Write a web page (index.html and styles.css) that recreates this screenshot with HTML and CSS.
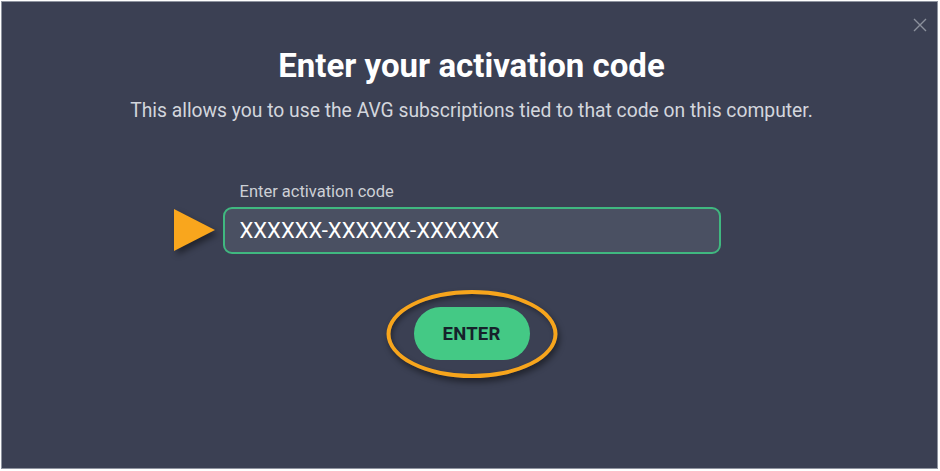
FILE: index.html
```html
<!DOCTYPE html>
<html lang="en">
<head>
<meta charset="utf-8">
<title>Enter your activation code</title>
<link rel="stylesheet" href="styles.css">
</head>
<body>
<div class="frame">
  <button class="close" aria-label="Close">
    <svg width="14" height="14" viewBox="0 0 14 14"><path d="M1 1L13 13M13 1L1 13" stroke="#8b909c" stroke-width="1.4" fill="none"/></svg>
  </button>
  <div class="content">
    <h1 class="title">Enter your activation code</h1>
    <p class="subtitle">This allows you to use the AVG subscriptions tied to that code on this computer.</p>
    <div class="field">
      <label class="label" for="code">Enter activation code</label>
      <div class="input-wrap">
        <span class="pointer" aria-hidden="true"></span>
        <input id="code" class="input" type="text" value="XXXXXX-XXXXXX-XXXXXX">
      </div>
    </div>
    <div class="action">
      <span class="ring" aria-hidden="true"></span>
      <button class="enter">ENTER</button>
    </div>
  </div>
</div>
</body>
</html>
```

FILE: styles.css
```css
* { box-sizing: border-box; }
html, body { margin: 0; padding: 0; }
body {
  background: #ffffff;
  width: 940px;
  height: 471px;
  padding: 1px 0 0 1px;
  font-family: Roboto, "Liberation Sans", sans-serif;
}
.frame {
  position: relative;
  width: 937px;
  height: 468px;
  background: #3b4053;
  border: 1px solid #8f94a0;
}
.close {
  position: absolute;
  top: 16px;
  right: 10px;
  width: 14px;
  height: 14px;
  padding: 0;
  border: 0;
  background: none;
  display: flex;
}
.content {
  display: flex;
  flex-direction: column;
  align-items: center;
  padding: 45px 0 0 4px;
}
.title {
  margin: 0;
  font-size: 33px;
  line-height: 38px;
  font-weight: 700;
  color: #ffffff;
}
.subtitle {
  margin: 14px 0 0;
  font-size: 19.3px;
  line-height: 24px;
  color: #d3d6dd;
}
.field {
  margin-top: 60px;
  display: flex;
  flex-direction: column;
  width: 498px;
}
.label {
  padding-left: 17px;
  font-size: 16.5px;
  line-height: 18px;
  color: #cdd0d6;
  margin-bottom: 6px;
}
.input-wrap {
  position: relative;
}
.pointer {
  position: absolute;
  left: -49px;
  top: 2px;
  width: 0;
  height: 0;
  border-top: 21px solid transparent;
  border-bottom: 21px solid transparent;
  border-left: 41px solid #f9a61d;
  filter: drop-shadow(3px 4px 3px rgba(0,0,0,0.45));
}
.input {
  display: block;
  width: 498px;
  height: 47px;
  padding: 0 15px;
  background: #4a5062;
  border: 2px solid #40b880;
  border-radius: 9px;
  color: #ffffff;
  font-family: Roboto, "Liberation Sans", sans-serif;
  font-size: 22px;
  outline: none;
}
.action {
  position: relative;
  margin-top: 53px;
  display: flex;
  justify-content: center;
}
.ring {
  position: absolute;
  left: 50%;
  top: 50%;
  width: 171px;
  height: 88px;
  transform: translate(-50%, -50%);
  border: 4px solid #f7a51c;
  border-radius: 50%;
  box-shadow: 2px 4px 6px rgba(0,0,0,0.45), inset 2px 3px 5px rgba(0,0,0,0.35);
}
.enter {
  width: 116px;
  height: 53px;
  border: 0;
  border-radius: 27px;
  background: #44c985;
  color: #16222b;
  font-family: Roboto, "Liberation Sans", sans-serif;
  font-weight: 700;
  font-size: 18.5px;
  letter-spacing: 0.2px;
}
```
